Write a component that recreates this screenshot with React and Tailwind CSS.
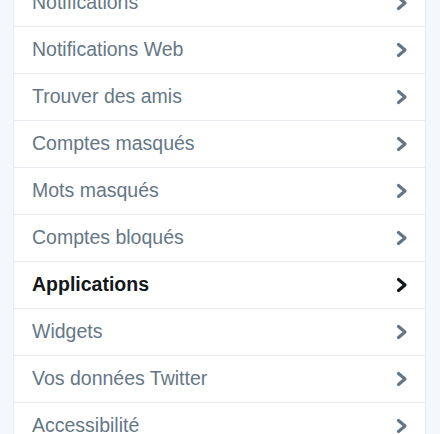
import React from "react";

const ITEMS = [
  { label: "Notifications" },
  { label: "Notifications Web" },
  { label: "Trouver des amis" },
  { label: "Comptes masqués" },
  { label: "Mots masqués" },
  { label: "Comptes bloqués" },
  { label: "Applications", active: true },
  { label: "Widgets" },
  { label: "Vos données Twitter" },
  { label: "Accessibilité" },
];

function Chevron({ active }) {
  return (
    <svg width="14" height="16" viewBox="0 0 14 16" className={active ? "text-[#14171a]" : "text-[#657786]"}>
      <polyline points="3.5,2.5 10,8 3.5,13.5" fill="none" stroke="currentColor" strokeWidth="3.2" strokeLinecap="round" strokeLinejoin="round" />
    </svg>
  );
}

export default function App() {
  return (
    <div className="h-[434px] w-[440px] overflow-hidden bg-[#f5f8fa]" style={{ fontFamily: '"Liberation Sans", Arial, sans-serif' }}>
      <div className="ml-[13px] mr-[14px] -mt-[20px] bg-white border-x border-[#e6ecf0]">
        {ITEMS.map((item) => (
          <div key={item.label} className="flex h-[47px] items-center justify-between border-b border-[#e6ecf0] pl-[18px] pr-[16px]">
            <span className={`text-[19.5px] leading-none ${item.active ? "font-bold text-[#14171a]" : "text-[#657786]"}`}>
              {item.label}
            </span>
            <Chevron active={item.active} />
          </div>
        ))}
      </div>
    </div>
  );
}
